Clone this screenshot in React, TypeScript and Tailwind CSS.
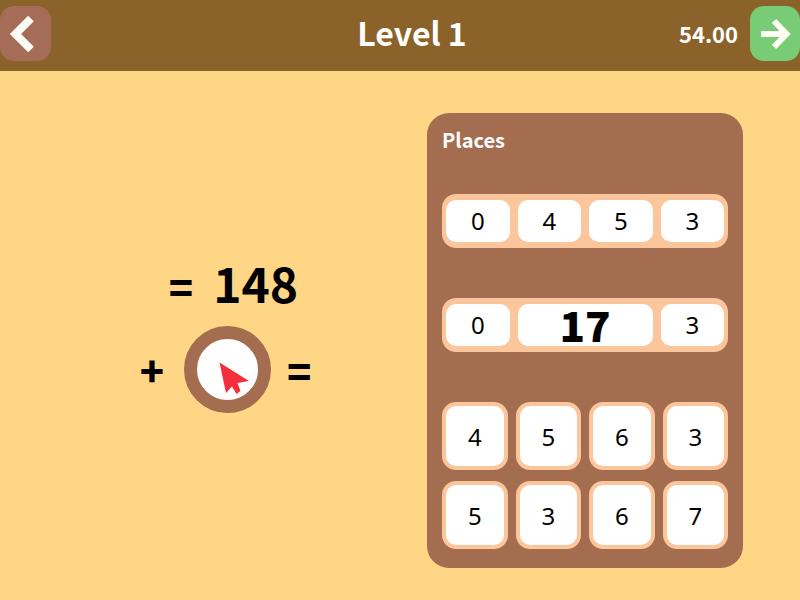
const bold = "font-['Noto_Sans_CJK_SC','Noto_Sans',sans-serif] font-bold";
const black = "font-['Noto_Sans_CJK_SC','Noto_Sans',sans-serif] font-black";

function Strip({ cells }: { cells: { value: string; wide?: boolean }[] }) {
  return (
    <div className="grid grid-cols-4 gap-2 rounded-[14px] bg-[#fcc69c] px-1 py-1.5">
      {cells.map((c, i) => (
        <button
          key={i}
          type="button"
          className={
            c.wide
              ? `col-span-2 flex h-[42px] items-center justify-center rounded-[10px] bg-white pb-0.5 text-[42px] leading-[38px] text-black ${black}`
              : "flex h-[42px] items-center justify-center rounded-[10px] bg-white text-2xl text-black"
          }
        >
          {c.value}
        </button>
      ))}
    </div>
  );
}

export default function App() {
  const tiles = ["4", "5", "6", "3", "5", "3", "6", "7"];
  return (
    <div className="flex min-h-screen flex-col bg-[#fed686] font-['Noto_Sans',sans-serif] text-black">
      <header className="grid h-[71px] grid-cols-[1fr_auto_1fr] items-start bg-[#8b6229] pt-1.5 text-white">
        <button
          type="button"
          aria-label="Back"
          className="flex h-[55px] w-[51px] items-center justify-center rounded-[14px] bg-[#a56d58]"
        >
          <svg viewBox="0 0 51 55" className="h-[55px] w-[51px]" fill="none" stroke="#fffdf8" strokeWidth="8">
            <path d="M31 12.5 L15.500 28 L31 43.5" />
          </svg>
        </button>
        <h1 className={`ml-6 text-[32px] leading-[52px] ${bold}`}>Level 1</h1>
        <div className="flex items-center justify-end gap-3">
          <span className={`text-[22px] ${bold}`}>54.00</span>
          <button
            type="button"
            aria-label="Next"
            className="flex h-[55px] w-[50px] items-center justify-center rounded-[14px] bg-[#79cc76]"
          >
            <svg viewBox="0 0 50 55" className="h-[55px] w-[50px]" fill="none" stroke="#fffef5" strokeWidth="6">
              <path d="M11 28 H36" />
              <path d="M24 15 L36.500 28 L24 41" />
            </svg>
          </button>
        </div>
      </header>

      <main className="flex flex-1 items-start">
        <section className="flex flex-1 flex-col items-center pt-[181px] pl-6" aria-label="Equation">
          <p className={`ml-4 flex h-[60px] items-baseline gap-5 text-5xl leading-[60px] ${bold}`}>
            <span className={`text-[40px] ${black}`}>=</span>
            <span>148</span>
          </p>
          <div className={`mt-[14px] flex items-center gap-5 text-[40px] leading-none ${black}`}>
            <span>+</span>
            <button
              type="button"
              aria-label="Answer"
              className="flex size-[87px] items-center justify-center rounded-full border-[13px] border-[#a56d50] bg-white"
            >
              <svg viewBox="0 0 61 61" className="size-[61px]" fill="#f42f3b">
                <path d="M22.500 23.500 L52 42 L40.500 44 L43.500 52 L39.500 55 L35 47.500 L29 54 Z" />
              </svg>
            </button>
            <span className="-ml-1">=</span>
          </div>
        </section>

        <section className="mt-[42px] mr-[57px] w-[316px] rounded-[22px] bg-[#a56d50] px-[15px] pt-3 pb-[19px]" aria-label="Places">
          <h2 className={`h-[30px] text-[20px] leading-[30px] text-white ${bold}`}>Places</h2>
          <div className="mt-[39px] flex flex-col gap-[50px]">
            <Strip cells={[{ value: "0" }, { value: "4" }, { value: "5" }, { value: "3" }]} />
            <Strip cells={[{ value: "0" }, { value: "17", wide: true }, { value: "3" }]} />
            <div className="grid grid-cols-4 gap-x-2 gap-y-[11px]">
              {tiles.map((t, i) => (
                <button
                  key={i}
                  type="button"
                  className="flex h-[68px] items-center justify-center rounded-[14px] border-4 border-[#fcc69c] bg-white pt-0.5 text-2xl"
                >
                  {t}
                </button>
              ))}
            </div>
          </div>
        </section>
      </main>
    </div>
  );
}
